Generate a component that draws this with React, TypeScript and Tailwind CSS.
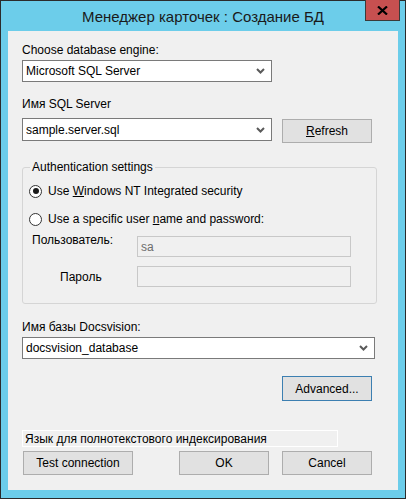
import React from 'react';

// Small chevron used by the combo boxes
const ComboArrow: React.FC = () => (
  <svg width="9" height="6" viewBox="0 0 9 6" className="shrink-0">
    <polyline points="1,1 4.5,4.5 8,1" fill="none" stroke="#5a5a5a" strokeWidth="2" />
  </svg>
);

const Combo: React.FC<{ value: string; width: string; height?: string }> = ({ value, width, height = 'h-[22px]' }) => (
  <div className={`${width} ${height} bg-white border border-[#7a7a7a] flex items-center pl-[3px] pr-[6px]`}>
    <span className="flex-1 truncate">{value}</span>
    <ComboArrow />
  </div>
);

const Button: React.FC<{ children: React.ReactNode; className?: string }> = ({ children, className = '' }) => (
  <button className={`bg-[#e1e1e1] border border-[#adadad] flex items-center justify-center ${className}`}>
    {children}
  </button>
);

const Radio: React.FC<{ checked?: boolean; children: React.ReactNode }> = ({ checked, children }) => (
  <div className="flex items-center h-[16px] pl-[6px]">
    <div className="w-[13px] h-[13px] rounded-full border border-[#333] bg-white flex items-center justify-center">
      {checked && <div className="w-[6px] h-[6px] rounded-full bg-[#1a1a1a]" />}
    </div>
    <span className="ml-[6px]">{children}</span>
  </div>
);

const App: React.FC = () => {
  return (
    <div className="w-[406px] h-[499px] bg-[#2b2b2b] p-px font-['Liberation_Sans',Arial,sans-serif] text-[12px] leading-[14px] text-black">
      <div className="relative h-full bg-[#6ccdea] flex flex-col px-[7px] pb-[8px]">
        {/* Title bar */}
        <div className="h-[30px] flex items-center justify-center text-[15px] text-[#1a1a1a] pt-[2px]">
          Менеджер карточек : Создание БД
        </div>
        <div className="absolute -top-px right-[5px] w-[35px] h-[21px] bg-[#c75050] border border-[#3a3a3a] border-t-0 flex items-center justify-center">
          <svg width="11" height="9" viewBox="0 0 11 9">
            <path d="M1 0.5 L10 8.5 M10 0.5 L1 8.5" stroke="#000" strokeWidth="2.2" />
          </svg>
        </div>

        {/* Client area */}
        <div className="flex-1 bg-[#f0f0f0] pl-[14px] pt-[12px] flex flex-col">
          <div>Choose database engine:</div>
          <div className="mt-[3px]">
            <Combo value="Microsoft SQL Server" width="w-[250px]" />
          </div>

          <div className="mt-[15px]">Имя SQL Server</div>
          <div className="mt-[7px] flex items-start">
            <Combo value="sample.server.sql" width="w-[250px]" height="h-[23px]" />
            <Button className="ml-[10px] mt-px w-[90px] h-[24px]">
              <span><u>R</u>efresh</span>
            </Button>
          </div>

          {/* Authentication group */}
          <fieldset className="mt-[17px] w-[355px] border border-[#d5d5d5] rounded-[3px] pb-[16px]">
            <legend className="ml-[7px] px-[2px]">Authentication settings</legend>
            <div className="mt-[9px]">
              <Radio checked>Use <u>W</u>indows NT Integrated security</Radio>
            </div>
            <div className="mt-[12px]">
              <Radio>Use a specific user <u>n</u>ame and password:</Radio>
            </div>
            <div className="mt-[6px] flex items-start">
              <div className="w-[114px] pl-[9px]">Пользователь:</div>
              <div className="mt-[3px] w-[214px] h-[21px] border border-[#c8c8c8] bg-[#f0f0f0] flex items-center pl-[3px] text-[#6d6d6d]">
                sa
              </div>
            </div>
            <div className="mt-[9px] flex items-start">
              <div className="w-[114px] pl-[37px] mt-[4px]">Пароль</div>
              <div className="w-[214px] h-[21px] border border-[#c8c8c8] bg-[#f0f0f0]" />
            </div>
          </fieldset>

          <div className="mt-[16px]">Имя базы Docsvision:</div>
          <div className="mt-[3px]">
            <Combo value="docsvision_database" width="w-[353px]" />
          </div>

          <Button className="mt-[17px] ml-[260px] w-[90px] h-[25px] !border-[#3c7fb1]">Advanced...</Button>

          <div className="mt-[29px] w-[316px] h-[17px] border border-white flex items-center pl-[2px]">
            Язык для полнотекстового индексирования
          </div>

          <div className="mt-[4px] flex">
            <Button className="ml-px w-[110px] h-[24px]">Test connection</Button>
            <Button className="ml-[46px] w-[90px] h-[24px]">OK</Button>
            <Button className="ml-[13px] w-[90px] h-[24px]">Cancel</Button>
          </div>
        </div>
      </div>
    </div>
  );
};

export default App;
